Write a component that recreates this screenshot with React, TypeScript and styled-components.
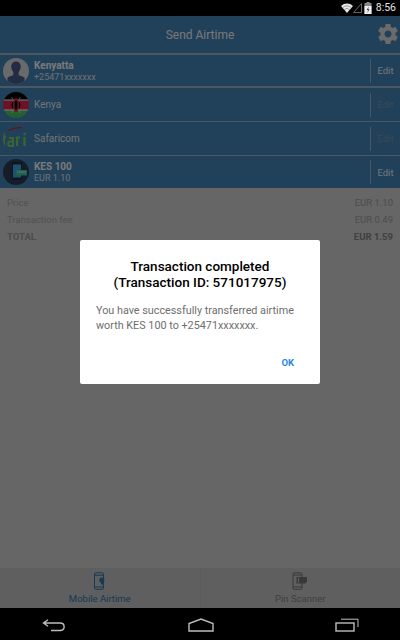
import React from "react";
import styled, { createGlobalStyle } from "styled-components";

const Global = createGlobalStyle`
  html, body { margin: 0; padding: 0; background: #000; }
  body { font-family: Roboto, "Liberation Sans", sans-serif; }
  #root { width: 400px; height: 640px; overflow: hidden; }
`;

const Screen = styled.div`
  width: 400px;
  height: 640px;
  display: flex;
  flex-direction: column;
  background: #000;
`;

const StatusBar = styled.div`
  height: 16px;
  flex: none;
  display: flex;
  align-items: center;
  justify-content: flex-end;
  padding-right: 4px;
  box-sizing: border-box;
`;

const Clock = styled.span`
  color: #e4e4e4;
  font-size: 10.5px;
  line-height: 16px;
  margin-left: 4px;
`;

const BatterySlot = styled.span`
  display: flex;
  margin-left: 2px;
`;

const Stage = styled.div`
  position: relative;
  flex: 1;
  display: flex;
  flex-direction: column;
  background: #ccc;
`;

const Header = styled.div`
  height: 37px;
  flex: none;
  display: flex;
  align-items: center;
  justify-content: center;
  position: relative;
  background: #4280b2;
  color: #f0f0f0;
  font-size: 12px;
`;

const GearSlot = styled.div`
  position: absolute;
  right: 0;
  top: 6px;
  width: 24px;
  height: 24px;
`;

const Rows = styled.div`
  display: flex;
  flex-direction: column;
  background: #4280b2;
`;

const Row = styled.div<{ $h: number; $thin?: boolean }>`
  height: ${(p) => p.$h}px;
  box-sizing: border-box;
  border-top: ${(p) => (p.$thin ? 1 : 2)}px solid #98aec2;
  display: flex;
  align-items: center;
  padding: 0 0 0 3px;
`;

const Avatar = styled.div`
  width: 26px;
  height: 26px;
  flex: none;
  border-radius: 50%;
  overflow: hidden;
`;

const RowText = styled.div`
  flex: 1;
  margin-left: 5px;
  display: flex;
  flex-direction: column;
  color: #f4f4f4;
  min-width: 0;
`;

const Name = styled.div<{ $bold?: boolean }>`
  font-size: 10px;
  line-height: 12px;
  font-weight: ${(p) => (p.$bold ? 700 : 400)};
  opacity: ${(p) => (p.$bold ? 1 : 0.9)};
`;

const Sub = styled.div`
  font-size: 9px;
  line-height: 10px;
  opacity: 0.85;
`;

const Edit = styled.div<{ $muted?: boolean }>`
  width: 30px;
  height: 24px;
  flex: none;
  box-sizing: border-box;
  border-left: 1px solid #98aec2;
  display: flex;
  align-items: center;
  justify-content: center;
  font-size: 9.5px;
  color: ${(p) => (p.$muted ? "#6f94b2" : "#e8eef3")};
`;

const Summary = styled.div`
  flex: 1;
  padding: 6px 7px 0 7px;
  display: flex;
  flex-direction: column;
`;

const SummaryRow = styled.div<{ $total?: boolean }>`
  height: 17px;
  display: flex;
  align-items: center;
  justify-content: space-between;
  font-size: 9.5px;
  font-weight: ${(p) => (p.$total ? 700 : 400)};
  color: ${(p) => (p.$total ? "#989898" : "#a2a2a2")};
`;

const SummaryValue = styled.span<{ $total?: boolean }>`
  color: ${(p) => (p.$total ? "#808080" : "#999")};
`;

const Tabs = styled.div`
  height: 40px;
  flex: none;
  display: flex;
  background: #bebebe;
`;

const Tab = styled.div<{ $active?: boolean }>`
  flex: 1;
  display: flex;
  flex-direction: column;
  align-items: center;
  padding-top: 4px;
  box-sizing: border-box;
  font-size: 9.5px;
  line-height: 11px;
  color: ${(p) => (p.$active ? "#2f72a8" : "#808080")};
  & + & {
    border-left: 1px solid #b6b6b6;
  }
`;

const TabIcon = styled.div`
  height: 19px;
  margin-bottom: 2px;
`;

const Scrim = styled.div`
  position: absolute;
  inset: 0;
  background: rgba(0, 0, 0, 0.5);
  display: flex;
  align-items: center;
  justify-content: center;
`;

const Dialog = styled.div`
  width: 240px;
  height: 144px;
  box-sizing: border-box;
  background: #fff;
  border-radius: 2px;
  padding: 18px 16px 0 16px;
  display: flex;
  flex-direction: column;
`;

const DialogTitle = styled.div`
  font-size: 13.5px;
  line-height: 16px;
  font-weight: 500;
  text-align: center;
  color: #000;
`;

const DialogBody = styled.div`
  margin-top: 13px;
  font-size: 10.8px;
  line-height: 15px;
  color: #6e6e6e;
`;

const DialogActions = styled.div`
  margin-top: 24px;
  padding-right: 10px;
  display: flex;
  justify-content: flex-end;
`;

const OkButton = styled.div`
  font-size: 9.5px;
  line-height: 12px;
  font-weight: 700;
  color: #1e88e5;
`;

const NavBar = styled.div`
  height: 32px;
  flex: none;
  display: flex;
  align-items: center;
  justify-content: space-between;
  padding: 2px 41px 0 42px;
  box-sizing: border-box;
`;

const Wifi = () => (
  <svg width="12" height="10" viewBox="0 0 12 10">
    <path d="M0 3 A8.5 8.5 0 0 1 12 3 L6 10 Z" fill="#e8e8e8" />
    <path d="M1.6 4.6 A6.4 6.4 0 0 1 10.4 4.6 M3.3 6.6 A4 4 0 0 1 8.7 6.6" fill="none" stroke="#555" strokeWidth="0.5" />
  </svg>
);
const Signal = () => (
  <svg width="9" height="10" viewBox="0 0 9 10">
    <path d="M0.5 9.5 L8.5 0.5 V9.5 Z" fill="none" stroke="#666" strokeWidth="1" />
  </svg>
);
const Battery = () => (
  <svg width="8" height="12" viewBox="0 0 8 12">
    <rect x="2.5" y="0" width="3" height="1.5" fill="#888" />
    <rect x="0.5" y="1" width="7" height="11" fill="#888" />
    <rect x="0.5" y="4" width="7" height="8" fill="#eee" />
    <path d="M4.6 4.5 L2.8 8 H4 L3.4 11 L5.4 7.2 H4.2 Z" fill="#333" />
  </svg>
);

const Gear = () => (
  <svg width="24" height="24" viewBox="0 0 24 24">
    <path
      fill="#d6d6d6"
      d="M19.43 12.98c.04-.32.07-.64.07-.98s-.03-.66-.07-.98l2.11-1.65c.19-.15.24-.42.12-.64l-2-3.46c-.12-.22-.39-.3-.61-.22l-2.49 1c-.52-.4-1.08-.73-1.69-.98l-.38-2.65C14.46 2.18 14.25 2 14 2h-4c-.25 0-.46.18-.49.42l-.38 2.65c-.61.25-1.17.59-1.69.98l-2.49-1c-.23-.09-.49 0-.61.22l-2 3.46c-.13.22-.07.49.12.64l2.11 1.65c-.04.32-.07.65-.07.98s.03.66.07.98l-2.11 1.65c-.19.15-.24.42-.12.64l2 3.46c.12.22.39.3.61.22l2.49-1c.52.4 1.08.73 1.69.98l.38 2.65c.03.24.24.42.49.42h4c.25 0 .46-.18.49-.42l.38-2.65c.61-.25 1.17-.59 1.69-.98l2.49 1c.23.09.49 0 .61-.22l2-3.46c.12-.22.07-.49-.12-.64l-2.11-1.65zM12 15.5c-1.93 0-3.5-1.57-3.5-3.5s1.57-3.5 3.5-3.5 3.5 1.57 3.5 3.5-1.57 3.5-3.5 3.5z"
    />
  </svg>
);

const PersonAvatar = () => (
  <svg width="26" height="26" viewBox="0 0 26 26">
    <rect width="26" height="26" fill="#d4d4d4" />
    <path d="M13 3.5c-3.3 0-5 2.6-4.7 5.6.2 2.2 1 4 2 5v3c-1.6 1-4.6 1.5-6 3L5 26h16l.7-5.9c-1.4-1.5-4.4-2-6-3v-3c1-1 1.8-2.8 2-5 .3-3-1.4-5.6-4.7-5.6z" fill="#46598a" />
  </svg>
);

const KenyaFlag = () => (
  <svg width="26" height="26" viewBox="0 0 26 26">
    <rect width="26" height="8" fill="#000" />
    <rect y="8" width="26" height="10" fill="#d8244a" />
    <rect y="18" width="26" height="8" fill="#48bf60" />
    <rect y="7.5" width="26" height="1" fill="#fff" />
    <rect y="17.5" width="26" height="1" fill="#fff" />
    <path d="M8.5 5 L17.5 21 M17.5 5 L8.5 21" stroke="#eee" strokeWidth="0.7" />
    <ellipse cx="13" cy="13" rx="3.2" ry="7" fill="#d8244a" />
    <ellipse cx="13" cy="13" rx="1.4" ry="4.5" fill="#000" />
    <path d="M9.8 10 Q8.5 13 9.8 16 M16.2 10 Q17.5 13 16.2 16" stroke="#000" strokeWidth="1.4" fill="none" />
  </svg>
);

const SafaricomLogo = () => (
  <svg width="26" height="26" viewBox="0 0 26 26">
    <path d="M5 4.5 Q14 0.5 23 1.5" stroke="#d2232a" strokeWidth="1.3" fill="none" />
    <path d="M1 7 V20 M0 11 H3" stroke="#78c85a" strokeWidth="2.2" fill="none" />
    <path d="M6 12 H10 V20 H6.5 C4.8 20 4.8 15.5 6.5 15.5 H10" stroke="#78c85a" strokeWidth="2" fill="none" />
    <path d="M14 20 V11.5 H17" stroke="#78c85a" strokeWidth="2.2" fill="none" />
    <path d="M21.5 11 V20" stroke="#78c85a" strokeWidth="2.4" fill="none" />
    <circle cx="21.5" cy="8" r="1.3" fill="#78c85a" />
  </svg>
);

const AmountIcon = () => (
  <svg width="26" height="26" viewBox="0 0 26 26">
    <rect width="26" height="26" fill="#2c3a52" />
    <rect x="9" y="3" width="10" height="18" rx="1.2" fill="#1a2c44" />
    <rect x="10" y="5.5" width="8" height="13" fill="#3aa6e0" />
    <rect x="13" y="11" width="11" height="5.5" rx="0.6" fill="#3ec49a" />
    <rect x="14" y="12.5" width="9" height="1" fill="#bfeedd" />
  </svg>
);

const PhoneTopUp = ({ color }: { color: string }) => (
  <svg width="14" height="19" viewBox="0 0 14 19">
    <rect x="1.5" y="0.8" width="9" height="16.5" rx="1.4" fill="none" stroke={color} strokeWidth="1" />
    <path d="M1.5 3.2 H10.5 M1.5 15 H10.5" stroke={color} strokeWidth="1" />
    <circle cx="8.8" cy="8" r="2.6" fill={color} />
    <rect x="8" y="9.5" width="2.4" height="3" fill={color} />
  </svg>
);

const PhoneScan = ({ color }: { color: string }) => (
  <svg width="16" height="19" viewBox="0 0 16 19">
    <rect x="1" y="0.8" width="9" height="16.5" rx="1.2" fill="none" stroke={color} strokeWidth="1" />
    <path d="M1 3 H10 M1 15 H10" stroke={color} strokeWidth="1" />
    <path d="M4.5 5 H15 V9.5 L13.5 11.5 H4.5 Z" fill={color} />
    <rect x="6" y="5.8" width="1" height="5" fill="#bebebe" />
  </svg>
);

const Back = () => (
  <svg width="24" height="13" viewBox="0 0 24 13">
    <path d="M6 0.8 L1.5 4 L6 7.2 M2 4 H18 C23.5 4 23.5 11.5 18 11.5 H9" fill="none" stroke="#bdbdbd" strokeWidth="1.4" />
  </svg>
);
const Home = () => (
  <svg width="26" height="14" viewBox="0 0 26 14">
    <path d="M1 13 V5.5 L13 1 L25 5.5 V13 Z" fill="none" stroke="#bdbdbd" strokeWidth="1.4" />
  </svg>
);
const Recents = () => (
  <svg width="24" height="14" viewBox="0 0 24 14">
    <rect x="1" y="5" width="18" height="8" fill="none" stroke="#bdbdbd" strokeWidth="1.4" />
    <path d="M6 1.2 H23 V9" fill="none" stroke="#bdbdbd" strokeWidth="1" />
  </svg>
);

export default function App() {
  return (
    <Screen>
      <Global />
      <StatusBar>
        <Wifi />
        <Signal />
        <BatterySlot><Battery /></BatterySlot>
        <Clock>8:56</Clock>
      </StatusBar>
      <Stage>
        <Header>
          Send Airtime
          <GearSlot>
            <Gear />
          </GearSlot>
        </Header>
        <Rows>
          <Row $h={33}>
            <Avatar><PersonAvatar /></Avatar>
            <RowText>
              <Name $bold>Kenyatta</Name>
              <Sub>+25471xxxxxxx</Sub>
            </RowText>
            <Edit>Edit</Edit>
          </Row>
          <Row $h={35}>
            <Avatar><KenyaFlag /></Avatar>
            <RowText><Name>Kenya</Name></RowText>
            <Edit $muted>Edit</Edit>
          </Row>
          <Row $h={34} $thin>
            <Avatar><SafaricomLogo /></Avatar>
            <RowText><Name>Safaricom</Name></RowText>
            <Edit $muted>Edit</Edit>
          </Row>
          <Row $h={33} $thin>
            <Avatar><AmountIcon /></Avatar>
            <RowText>
              <Name $bold>KES 100</Name>
              <Sub>EUR 1.10</Sub>
            </RowText>
            <Edit>Edit</Edit>
          </Row>
        </Rows>
        <Summary>
          <SummaryRow>
            Price <SummaryValue>EUR 1.10</SummaryValue>
          </SummaryRow>
          <SummaryRow>
            Transaction fee <SummaryValue>EUR 0.49</SummaryValue>
          </SummaryRow>
          <SummaryRow $total>
            TOTAL <SummaryValue $total>EUR 1.59</SummaryValue>
          </SummaryRow>
        </Summary>
        <Tabs>
          <Tab $active>
            <TabIcon><PhoneTopUp color="#2f72a8" /></TabIcon>
            Mobile Airtime
          </Tab>
          <Tab>
            <TabIcon><PhoneScan color="#707070" /></TabIcon>
            Pin Scanner
          </Tab>
        </Tabs>
        <Scrim>
          <Dialog>
            <DialogTitle>
              Transaction completed
              <br />
              (Transaction ID: 571017975)
            </DialogTitle>
            <DialogBody>
              You have successfully transferred airtime worth KES 100 to +25471xxxxxxx.
            </DialogBody>
            <DialogActions>
              <OkButton>OK</OkButton>
            </DialogActions>
          </Dialog>
        </Scrim>
      </Stage>
      <NavBar>
        <Back />
        <Home />
        <Recents />
      </NavBar>
    </Screen>
  );
}
